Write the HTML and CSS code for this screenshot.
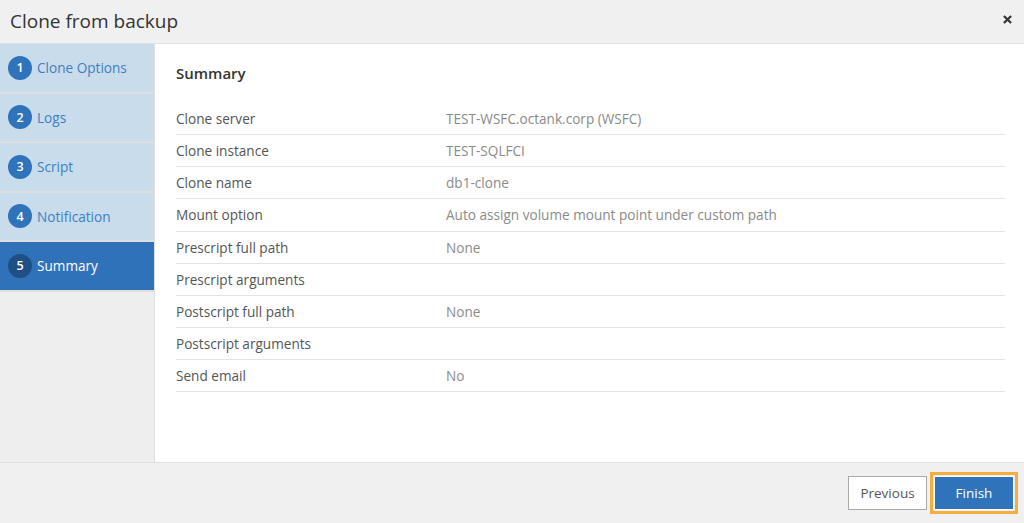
FILE: index.html
```html
<!DOCTYPE html>
<html lang="en">

<head>
    <meta charset="UTF-8">
    <meta name="viewport" content="width=device-width, initial-scale=1.0">
    <title>Clone from backup</title>
    <link rel="stylesheet" href="styles.css">
</head>

<body>
    <div class="dialog">
        <div class="dialog-header">
            <div class="dialog-title">Clone from backup</div>
            <svg class="close" viewBox="0 0 10 10" width="9" height="9">
                <path d="M1 1 L9 9 M9 1 L1 9"></path>
            </svg>
        </div>

        <div class="dialog-body">
            <div class="steps">
                <div class="step">
                    <span class="step-num">1</span>
                    <span class="step-label">Clone Options</span>
                </div>
                <div class="step">
                    <span class="step-num">2</span>
                    <span class="step-label">Logs</span>
                </div>
                <div class="step">
                    <span class="step-num">3</span>
                    <span class="step-label">Script</span>
                </div>
                <div class="step">
                    <span class="step-num">4</span>
                    <span class="step-label">Notification</span>
                </div>
                <div class="step active">
                    <span class="step-num">5</span>
                    <span class="step-label">Summary</span>
                </div>
            </div>

            <div class="content">
                <h2 class="content-title">Summary</h2>
                <div class="summary">
                    <div class="row">
                        <div class="key">Clone server</div>
                        <div class="value">TEST-WSFC.octank.corp (WSFC)</div>
                    </div>
                    <div class="row">
                        <div class="key">Clone instance</div>
                        <div class="value">TEST-SQLFCI</div>
                    </div>
                    <div class="row">
                        <div class="key">Clone name</div>
                        <div class="value">db1-clone</div>
                    </div>
                    <div class="row">
                        <div class="key">Mount option</div>
                        <div class="value">Auto assign volume mount point under custom path</div>
                    </div>
                    <div class="row">
                        <div class="key">Prescript full path</div>
                        <div class="value">None</div>
                    </div>
                    <div class="row">
                        <div class="key">Prescript arguments</div>
                        <div class="value"></div>
                    </div>
                    <div class="row">
                        <div class="key">Postscript full path</div>
                        <div class="value">None</div>
                    </div>
                    <div class="row">
                        <div class="key">Postscript arguments</div>
                        <div class="value"></div>
                    </div>
                    <div class="row">
                        <div class="key">Send email</div>
                        <div class="value">No</div>
                    </div>
                </div>
            </div>
        </div>

        <div class="dialog-footer">
            <button class="btn">Previous</button>
            <button class="btn btn-primary">Finish</button>
        </div>
    </div>
</body>

</html>
```

FILE: styles.css
```css
body {
    font-family: 'Open Sans', 'Liberation Sans', sans-serif;
    margin: 0;
    color: #444;
}

.dialog {
    display: flex;
    flex-direction: column;
    height: 100vh;
    background: #ffffff;
}

.dialog-header {
    display: flex;
    justify-content: space-between;
    align-items: center;
    height: 43px;
    padding: 0 12px 0 10px;
    background: #f0f0f0;
    border-bottom: 1px solid #e2e2e2;
    flex-shrink: 0;
}

.dialog-title {
    font-size: 19px;
    color: #333;
    margin-top: -1px;
}

.close {
    margin-top: -5px;
}

.close path {
    stroke: #333;
    stroke-width: 2.4;
    fill: none;
}

.dialog-body {
    display: flex;
    flex: 1;
    min-height: 0;
}

.steps {
    width: 154px;
    background: #eeeeee;
    border-right: 1px solid #e0e0e0;
    flex-shrink: 0;
}

.step {
    display: flex;
    align-items: center;
    gap: 5px;
    height: 47.5px;
    padding-left: 8px;
    background: #c9dcec;
    border-bottom: 2px solid #dedede;
}

.step-num {
    display: flex;
    justify-content: center;
    align-items: center;
    width: 24px;
    height: 24px;
    border-radius: 50%;
    background: #2f73ba;
    color: #ffffff;
    font-size: 12.5px;
    font-weight: 600;
}

.step-label {
    font-size: 13.6px;
    color: #3d7fc3;
}

.step.active {
    background: #2f72ba;
}

.step.active .step-num {
    background: #1e4f85;
}

.step.active .step-label {
    color: #ffffff;
}

.content {
    flex: 1;
    padding: 19px 19px 0 21px;
}

.content-title {
    margin: 0 0 20px 0;
    font-size: 15px;
    font-weight: 600;
    line-height: 20px;
    color: #333;
}

.row {
    display: flex;
    align-items: center;
    height: 31.125px;
    border-bottom: 1px solid #e3e3e3;
    font-size: 13.6px;
}

.key {
    width: 270px;
    color: #555;
}

.value {
    color: #8a8a8a;
}

.dialog-footer {
    display: flex;
    justify-content: flex-end;
    align-items: center;
    gap: 6px;
    height: 60px;
    padding-right: 10px;
    background: #f0f0f0;
    border-top: 1px solid #e2e2e2;
    flex-shrink: 0;
}

.btn {
    font-family: 'Open Sans', 'Liberation Sans', sans-serif;
    font-size: 13.5px;
    height: 34px;
    width: 79px;
    background: #ffffff;
    color: #555;
    border: 1px solid #a9a9a9;
    padding: 0;
}

.btn-primary {
    width: 80px;
    background: #2f73ba;
    color: #ffffff;
    border: 1px solid #ffffff;
    outline: 3px solid #f5ad3b;
    outline-offset: 1px;
    margin-left: 1px;
}
```
